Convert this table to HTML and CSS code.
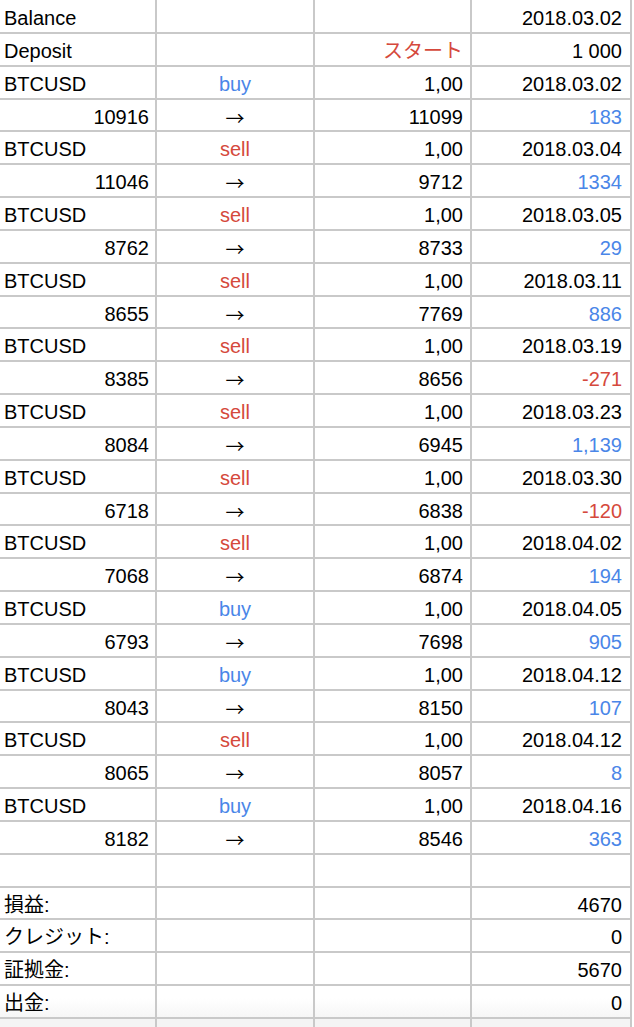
FILE: index.html
```html
<!DOCTYPE html>
<html lang="ja">
<head>
<meta charset="utf-8">
<title>Sheet</title>
<link rel="stylesheet" href="styles.css">
</head>
<body>
<div class="sheet">
  <div class="cell l first">Balance</div><div class="cell first"></div><div class="cell first"></div><div class="cell r4 first">2018.03.02</div>
  <div class="cell l">Deposit</div><div class="cell"></div><div class="cell r3 sell">スタート</div><div class="cell r4">1 000</div>

  <div class="cell l">BTCUSD</div><div class="cell c buy">buy</div><div class="cell r3">1,00</div><div class="cell r4">2018.03.02</div>
  <div class="cell r1">10916</div><div class="cell c arrow">→</div><div class="cell r3">11099</div><div class="cell r4 buy">183</div>

  <div class="cell l">BTCUSD</div><div class="cell c sell">sell</div><div class="cell r3">1,00</div><div class="cell r4">2018.03.04</div>
  <div class="cell r1">11046</div><div class="cell c arrow">→</div><div class="cell r3">9712</div><div class="cell r4 buy">1334</div>

  <div class="cell l">BTCUSD</div><div class="cell c sell">sell</div><div class="cell r3">1,00</div><div class="cell r4">2018.03.05</div>
  <div class="cell r1">8762</div><div class="cell c arrow">→</div><div class="cell r3">8733</div><div class="cell r4 buy">29</div>

  <div class="cell l">BTCUSD</div><div class="cell c sell">sell</div><div class="cell r3">1,00</div><div class="cell r4">2018.03.11</div>
  <div class="cell r1">8655</div><div class="cell c arrow">→</div><div class="cell r3">7769</div><div class="cell r4 buy">886</div>

  <div class="cell l">BTCUSD</div><div class="cell c sell">sell</div><div class="cell r3">1,00</div><div class="cell r4">2018.03.19</div>
  <div class="cell r1">8385</div><div class="cell c arrow">→</div><div class="cell r3">8656</div><div class="cell r4 sell">-271</div>

  <div class="cell l">BTCUSD</div><div class="cell c sell">sell</div><div class="cell r3">1,00</div><div class="cell r4">2018.03.23</div>
  <div class="cell r1">8084</div><div class="cell c arrow">→</div><div class="cell r3">6945</div><div class="cell r4 buy">1,139</div>

  <div class="cell l">BTCUSD</div><div class="cell c sell">sell</div><div class="cell r3">1,00</div><div class="cell r4">2018.03.30</div>
  <div class="cell r1">6718</div><div class="cell c arrow">→</div><div class="cell r3">6838</div><div class="cell r4 sell">-120</div>

  <div class="cell l">BTCUSD</div><div class="cell c sell">sell</div><div class="cell r3">1,00</div><div class="cell r4">2018.04.02</div>
  <div class="cell r1">7068</div><div class="cell c arrow">→</div><div class="cell r3">6874</div><div class="cell r4 buy">194</div>

  <div class="cell l">BTCUSD</div><div class="cell c buy">buy</div><div class="cell r3">1,00</div><div class="cell r4">2018.04.05</div>
  <div class="cell r1">6793</div><div class="cell c arrow">→</div><div class="cell r3">7698</div><div class="cell r4 buy">905</div>

  <div class="cell l">BTCUSD</div><div class="cell c buy">buy</div><div class="cell r3">1,00</div><div class="cell r4">2018.04.12</div>
  <div class="cell r1">8043</div><div class="cell c arrow">→</div><div class="cell r3">8150</div><div class="cell r4 buy">107</div>

  <div class="cell l">BTCUSD</div><div class="cell c sell">sell</div><div class="cell r3">1,00</div><div class="cell r4">2018.04.12</div>
  <div class="cell r1">8065</div><div class="cell c arrow">→</div><div class="cell r3">8057</div><div class="cell r4 buy">8</div>

  <div class="cell l">BTCUSD</div><div class="cell c buy">buy</div><div class="cell r3">1,00</div><div class="cell r4">2018.04.16</div>
  <div class="cell r1">8182</div><div class="cell c arrow">→</div><div class="cell r3">8546</div><div class="cell r4 buy">363</div>

  <div class="cell"></div><div class="cell"></div><div class="cell"></div><div class="cell"></div>

  <div class="cell l">損益:</div><div class="cell"></div><div class="cell"></div><div class="cell r4">4670</div>
  <div class="cell l">クレジット:</div><div class="cell"></div><div class="cell"></div><div class="cell r4">0</div>
  <div class="cell l">証拠金:</div><div class="cell"></div><div class="cell"></div><div class="cell r4">5670</div>
  <div class="cell l last">出金:</div><div class="cell last"></div><div class="cell last"></div><div class="cell r4 last">0</div>

  <div class="cell tail"></div><div class="cell tail"></div><div class="cell tail"></div><div class="cell tail"></div>
</div>
</body>
</html>
```

FILE: styles.css
```css
html, body {
  margin: 0;
  padding: 0;
  background: #ffffff;
}

body {
  width: 634px;
  height: 1027px;
  overflow: hidden;
  font-family: "Liberation Sans", Arial, "Noto Sans CJK JP", sans-serif;
  font-size: 20px;
  color: #000000;
}

.sheet {
  display: grid;
  grid-template-columns: 155px 156px 155px 158px;
  grid-template-rows: 32px repeat(30, 30.83px) 12px;
  column-gap: 2px;
  row-gap: 2px;
  background: #c9c9c9;
  width: 632px;
  padding-right: 2px;
  box-sizing: border-box;
}

.cell {
  background: #ffffff;
  line-height: 23px;
  padding-top: 6px;
  box-sizing: border-box;
  white-space: nowrap;
  overflow: hidden;
}

.cell.first {
  padding-top: 7px;
}

.l {
  text-align: left;
  padding-left: 4px;
}

.c {
  text-align: center;
}

.r1 {
  text-align: right;
  padding-right: 6px;
}

.r3 {
  text-align: right;
  padding-right: 7px;
}

.r4 {
  text-align: right;
  padding-right: 8px;
}

.buy {
  color: #4a86e8;
}

.sell {
  color: #d5493c;
}

.arrow {
  font-family: "Noto Sans CJK JP", sans-serif;
  font-size: 19px;
  line-height: 23px;
  padding-top: 6px;
}

.cell.last {
  background: linear-gradient(#ffffff 40%, #f6f6f6 100%);
}

.cell.tail {
  background: #f4f4f4;
}
```
